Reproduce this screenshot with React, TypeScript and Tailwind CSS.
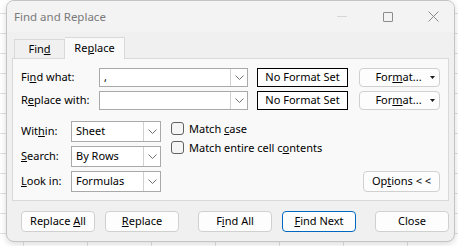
import React from 'react'

const font = { fontFamily: '"Noto Sans", "Segoe UI", sans-serif' }

function Chevron() {
  return (
    <svg width="9" height="5" viewBox="0 0 9 5" fill="none">
      <polyline points="0.5,0.5 4.5,4.5 8.5,0.5" stroke="#6f6f6f" strokeWidth="1" />
    </svg>
  )
}

function Combo({ value, width, height }: { value?: string; width: string; height: string }) {
  return (
    <div className={`flex ${width} ${height} border border-[#a9a9a9] bg-white`}>
      <div className="flex-1 flex items-center pl-[4px] text-[11px] text-black">{value}</div>
      <div className="w-[17px] flex items-center justify-center border-l border-[#d0d0d0] bg-white">
        <Chevron />
      </div>
    </div>
  )
}

function Btn({ children, primary }: { children: React.ReactNode; primary?: boolean }) {
  return (
    <div
      className={`w-[74px] h-[21px] flex items-center justify-center rounded-[4px] bg-[#fdfdfd] text-[11px] text-black ${
        primary ? 'border border-[#0067c0]' : 'border border-[#d0d0d0]'
      }`}
    >
      <span>{children}</span>
    </div>
  )
}

function FormatBtn() {
  return (
    <div className="ml-[11px] w-[81px] h-[19px] border border-[#d0d0d0] rounded-[4px] bg-[#fdfdfd] flex items-center justify-center text-[11px] text-black relative">
      <span className="pr-[2px]">
        For<u>m</u>at...
      </span>
      <svg width="5" height="3" viewBox="0 0 5 3" className="absolute right-[4px] top-[7px]">
        <path d="M0 0 L5 0 L2.5 3 Z" fill="#1a1a1a" />
      </svg>
    </div>
  )
}

function Check({ children }: { children: React.ReactNode }) {
  return (
    <div className="flex items-center h-[13px] gap-[5px]">
      <div className="w-[13px] h-[13px] rounded-[3px] border border-[#616161] bg-[#f5f5f5]" />
      <span className="text-[11px] text-black leading-none">{children}</span>
    </div>
  )
}

export default function App() {
  return (
    <div
      className="w-[458px] h-[246px] overflow-hidden bg-white bg-[linear-gradient(to_right,#e0e0e0_1px,transparent_1px),linear-gradient(to_bottom,#e0e0e0_1px,transparent_1px)] bg-size-[64px_20px] bg-position-[23px_13px] pl-[6px]"
      style={font}
    >
      <div className="w-[449px] h-[242px] rounded-[8px] border border-[#c4c4c4] bg-[#f0f0f0] shadow-[0_2px_6px_rgba(0,0,0,0.15)] flex flex-col overflow-hidden">
        {/* Title bar */}
        <div className="h-[31px] flex items-center bg-[#f3f3f3] shrink-0">
          <span className="ml-[7px] text-[11.5px] text-[#7a7a7a]">Find and Replace</span>
          <div className="ml-auto flex items-center">
            <div className="w-[10px] h-px bg-[#d6d6d6] mr-[36px]" />
            <div className="w-[10px] h-[10px] border border-[#8c8c8c] rounded-[1px] mr-[35px]" />
            <svg width="11" height="11" viewBox="0 0 11 11" className="mr-[15px]">
              <path d="M0.5 0.5 L10.5 10.5 M10.5 0.5 L0.5 10.5" stroke="#8c8c8c" strokeWidth="1" />
            </svg>
          </div>
        </div>

        {/* Tabs */}
        <div className="flex items-end h-[27px] ml-[7px] mt-[-1px]">
          <div className="w-[51px] h-[19px] border border-b-0 border-[#d9d9d9] bg-[#f0f0f0] flex items-center justify-center text-[11px] text-black">
            <span>
              Fin<u>d</u>
            </span>
          </div>
          <div className="w-[60px] h-[22px] border border-b-0 border-l-0 border-[#d9d9d9] bg-[#f9f9f9] flex items-center justify-center text-[11px] text-black relative top-px">
            <span>
              Re<u>p</u>lace
            </span>
          </div>
        </div>

        {/* Panel */}
        <div className="ml-[5px] w-[437px] h-[143px] border border-[#d9d9d9] bg-[#f9f9f9] px-[8px] pt-[9px] flex flex-col">
          <div className="flex items-center h-[19px]">
            <span className="w-[78px] text-[11px] text-black">
              Fi<u>n</u>d what:
            </span>
            <Combo value="," width="w-[149px]" height="h-[19px]" />
            <div className="ml-[9px] w-[91px] h-[19px] border border-black bg-white flex items-center justify-center text-[11px] text-black">
              No Format Set
            </div>
            <FormatBtn />
          </div>
          <div className="flex items-center h-[19px] mt-[4px]">
            <span className="w-[78px] text-[11px] text-black">
              R<u>e</u>place with:
            </span>
            <Combo width="w-[149px]" height="h-[19px]" />
            <div className="ml-[9px] w-[91px] h-[19px] border border-black bg-white flex items-center justify-center text-[11px] text-black">
              No Format Set
            </div>
            <FormatBtn />
          </div>

          <div className="flex mt-[11px]">
            <div className="flex flex-col gap-[4px]">
              <div className="flex items-center">
                <span className="w-[50px] text-[11px] text-black">
                  Wit<u>h</u>in:
                </span>
                <Combo value="Sheet" width="w-[90px]" height="h-[21px]" />
              </div>
              <div className="flex items-center">
                <span className="w-[50px] text-[11px] text-black">
                  <u>S</u>earch:
                </span>
                <Combo value="By Rows" width="w-[90px]" height="h-[21px]" />
              </div>
              <div className="flex items-center">
                <span className="w-[50px] text-[11px] text-black">
                  <u>L</u>ook in:
                </span>
                <Combo value="Formulas" width="w-[90px]" height="h-[21px]" />
              </div>
            </div>
            <div className="ml-[10px] pt-px flex flex-col gap-[6px]">
              <Check>
                Match <u>c</u>ase
              </Check>
              <Check>
                Match entire cell c<u>o</u>ntents
              </Check>
            </div>
            <div className="flex-1 flex items-end justify-end">
              <div className="w-[77px] h-[21px] border border-[#d0d0d0] rounded-[4px] bg-[#fdfdfd] flex items-center justify-center text-[11px] text-black">
                <span>
                  Op<u>t</u>ions &lt; &lt;
                </span>
              </div>
            </div>
          </div>
        </div>

        {/* Buttons */}
        <div className="flex mt-[10px] ml-[14px]">
          <Btn>
            Replace <u>A</u>ll
          </Btn>
          <div className="ml-[10px]">
            <Btn>
              <u>R</u>eplace
            </Btn>
          </div>
          <div className="ml-[19px]">
            <Btn>
              F<u>i</u>nd All
            </Btn>
          </div>
          <div className="ml-[10px]">
            <Btn primary>
              <u>F</u>ind Next
            </Btn>
          </div>
          <div className="ml-[19px]">
            <Btn>Close</Btn>
          </div>
        </div>
      </div>
    </div>
  )
}
